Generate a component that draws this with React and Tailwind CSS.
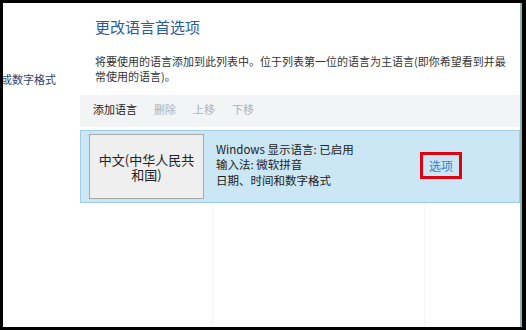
import React from "react";

export default function App() {
  const font = { fontFamily: '"Noto Sans CJK SC", "Noto Sans", sans-serif' };
  return (
    <div className="w-[526px] h-[330px] bg-black pt-[3px] pl-[3px] pb-[3px] pr-[4px]" style={font}>
      <div className="flex h-full bg-white overflow-hidden">
        {/* left column */}
        <div className="w-[77px] shrink-0 relative">
          <div className="pt-[68px] -ml-[2px] text-[11px] leading-[16px] text-[#2b4470] whitespace-nowrap">或数字格式</div>
        </div>
        {/* main */}
        <div className="flex-1 flex flex-col relative">
          <div className="pl-[15px] pt-[14px] text-[15px] leading-[20px] text-[#2a5aa0]">更改语言首选项</div>
          <div className="pl-[15px] pr-[6px] pt-[17px] text-[11px] leading-[15px] text-[#333] whitespace-nowrap">
            将要使用的语言添加到此列表中。位于列表第一位的语言为主语言(即你希望看到并最
            <br />
            常使用的语言)。
          </div>
          <div className="mt-[11px] h-[32px] bg-[#f3f4f6] flex items-center gap-[17px] pl-[13px] text-[11px] pb-[3px]">
            <span className="text-[#222]">添加语言</span>
            <span className="text-[#aab3bd]">删除</span>
            <span className="text-[#aab3bd]">上移</span>
            <span className="text-[#aab3bd]">下移</span>
          </div>
          <div className="mt-[3px] h-[73px] bg-[#cbe6f4] border border-[#9fcfe6] flex items-center">
            <div className="ml-[8px] w-[115px] h-[65px] bg-[#efefef] border border-[#a9a9a9] flex items-center justify-center text-center text-[13px] leading-[15px] text-[#222] px-[8px]">
              中文(中华人民共和国)
            </div>
            <div className="ml-[12px] text-[11.5px] leading-[15.5px] text-[#222] pb-[3px] w-[204px]">
              <div>Windows 显示语言: 已启用</div>
              <div>输入法: 微软拼音</div>
              <div>日期、时间和数字格式</div>
            </div>
            <div className="w-[42px] h-[27px] border-[3px] border-[#e00010] flex items-center justify-center text-[12px] text-[#3a7fc4] -mt-[2px]">
              选项
            </div>
          </div>
          <div className="flex-1 flex">
            <div className="w-[133px] border-r border-[#f4f5f5]"></div>
            <div className="w-[212px] border-r border-[#f4f6f6]"></div>
          </div>
        </div>
        <div className="w-[2px] bg-[#8fb3b3]"></div>
      </div>
    </div>
  );
}
